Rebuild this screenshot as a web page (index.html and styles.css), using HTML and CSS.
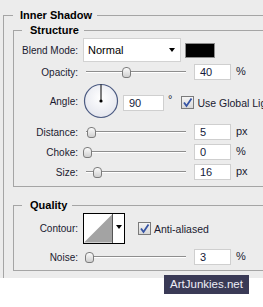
FILE: index.html
```html
<!DOCTYPE html>
<html lang="en">
<head>
    <meta charset="UTF-8">
    <meta name="viewport" content="width=device-width, initial-scale=1.0">
    <title>Inner Shadow</title>
    <link rel="stylesheet" href="styles.css">
</head>
<body>
<div class="panel">
    <fieldset class="group outer">
        <legend>Inner Shadow</legend>

        <fieldset class="group inner structure">
            <legend>Structure</legend>

            <div class="row blend-row">
                <label class="lbl">Blend Mode:</label>
                <div class="select"><span>Normal</span><span class="arrow"></span></div>
                <div class="swatch"></div>
            </div>

            <div class="row slider-row">
                <label class="lbl">Opacity:</label>
                <div class="slider"><div class="track"></div><div class="thumb" style="left:39px"></div></div>
                <div class="num">40</div>
                <span class="unit">%</span>
            </div>

            <div class="row angle-row">
                <label class="lbl">Angle:</label>
                <svg class="dial" width="36" height="36" viewBox="0 0 36 36">
                    <defs>
                        <radialGradient id="dialFill" cx="50%" cy="40%" r="60%">
                            <stop offset="0" stop-color="#ffffff"/>
                            <stop offset="1" stop-color="#e4e6ee"/>
                        </radialGradient>
                    </defs>
                    <circle cx="18" cy="18" r="16.5" fill="url(#dialFill)" stroke="#4c5b82" stroke-width="1.2"/>
                    <line x1="18" y1="18" x2="18" y2="1.5" stroke="#000" stroke-width="1"/>
                    <circle cx="18" cy="18" r="1.6" fill="#000"/>
                </svg>
                <div class="num wide">90</div>
                <span class="deg">°</span>
                <span class="check">
                    <svg width="13" height="13" viewBox="0 0 13 13">
                        <path d="M3 6.5 L5.5 10 L10.5 2.5" fill="none" stroke="#3654a4" stroke-width="1.8"/>
                    </svg>
                </span>
                <span class="check-text">Use Global Light</span>
            </div>

            <div class="row slider-row first-gap">
                <label class="lbl">Distance:</label>
                <div class="slider"><div class="track"></div><div class="thumb" style="left:4px"></div></div>
                <div class="num">5</div>
                <span class="unit">px</span>
            </div>

            <div class="row slider-row">
                <label class="lbl">Choke:</label>
                <div class="slider"><div class="track"></div><div class="thumb" style="left:0px"></div></div>
                <div class="num">0</div>
                <span class="unit">%</span>
            </div>

            <div class="row slider-row">
                <label class="lbl">Size:</label>
                <div class="slider"><div class="track"></div><div class="thumb" style="left:10px"></div></div>
                <div class="num">16</div>
                <span class="unit">px</span>
            </div>
        </fieldset>

        <fieldset class="group inner quality">
            <legend>Quality</legend>

            <div class="row contour-row">
                <label class="lbl">Contour:</label>
                <div class="contour">
                    <svg class="curve" width="29" height="29" viewBox="0 0 29 29">
                        <rect width="29" height="29" fill="#fff"/>
                        <polygon points="0,29 29,0 29,29" fill="#a3a3a3"/>
                    </svg>
                    <span class="contour-drop"><span class="arrow"></span></span>
                </div>
                <span class="check aa">
                    <svg width="13" height="13" viewBox="0 0 13 13">
                        <path d="M3 6.5 L5.5 10 L10.5 2.5" fill="none" stroke="#3654a4" stroke-width="1.8"/>
                    </svg>
                </span>
                <span class="check-text">Anti-aliased</span>
            </div>

            <div class="row slider-row noise-row">
                <label class="lbl">Noise:</label>
                <div class="slider"><div class="track"></div><div class="thumb" style="left:2px"></div></div>
                <div class="num">3</div>
                <span class="unit">%</span>
            </div>
        </fieldset>
    </fieldset>
</div>

<div class="watermark">ArtJunkies.net</div>
</body>
</html>
```

FILE: styles.css
```css
* {
    box-sizing: border-box;
}

html, body {
    margin: 0;
}

body {
    width: 263px;
    height: 307px;
    overflow: hidden;
    position: relative;
    background-color: #ffffff;
    font-family: "Liberation Sans", Arial, sans-serif;
    font-size: 10px;
    color: #1a1a30;
}

.panel {
    height: 278px;
    padding: 8px 0 0 3px;
    overflow: hidden;
    background-color: #ececec;
}

.group {
    margin: 0;
    min-width: 0;
    border: 1px solid #a5a5a5;
}

.group legend {
    font-size: 11px;
    font-weight: bold;
    line-height: 15px;
    color: #000;
}

.outer {
    width: 300px;
    padding: 0 0 40px 9px;
}

.outer > legend {
    padding: 0 5px 0 7px;
}

.inner {
    padding: 0 0 4px 8px;
}

.inner > legend {
    padding: 0 5px 0 8px;
}

.quality {
    margin-top: 11px;
    padding-bottom: 3px;
}

.row {
    display: flex;
    align-items: center;
}

.lbl {
    flex: none;
    width: 56px;
    margin-right: 5px;
    text-align: right;
    white-space: nowrap;
}

/* blend mode */
.blend-row {
    height: 24px;
}

.select {
    display: flex;
    align-items: center;
    width: 98px;
    height: 24px;
    padding: 0 5px 0 4px;
    background-color: #fff;
    border: 1px solid #d2d2d2;
    font-size: 11px;
    color: #000;
}

.arrow {
    margin-left: auto;
    width: 0;
    height: 0;
    border-left: 3.5px solid transparent;
    border-right: 3.5px solid transparent;
    border-top: 4px solid #000;
}

.swatch {
    width: 30px;
    height: 15px;
    margin-left: 4px;
    background-color: #000;
    border: 1px solid #8c8c8c;
}

/* sliders */
.slider-row {
    height: 20px;
}

.first-gap {
    margin-top: 2px;
}

.slider {
    position: relative;
    flex: none;
    width: 111px;
    height: 20px;
}

.track {
    position: absolute;
    left: 3px;
    top: 9px;
    width: 100px;
    height: 2px;
    border-top: 1px solid #8e8e8e;
    border-bottom: 1px solid #fff;
}

.thumb {
    position: absolute;
    top: 5px;
    width: 9px;
    height: 11px;
    border: 1px solid #7c7c7c;
    border-radius: 4px 4px 3px 3px;
    background: linear-gradient(#fbfbfb, #cfcfcf);
}

.num {
    flex: none;
    width: 37px;
    height: 16px;
    padding-left: 5px;
    line-height: 14px;
    font-size: 11px;
    color: #141a3a;
    background-color: #fff;
    border: 1px solid #cfcfcf;
}

.num.wide {
    width: 41px;
}

.unit {
    align-self: flex-start;
    margin: 3px 0 0 5px;
    font-size: 11px;
}

/* angle */
.angle-row {
    height: 38px;
}

.dial {
    flex: none;
    margin-right: 4px;
}

.angle-row .num {
    margin-top: 3px;
}

.deg {
    align-self: flex-start;
    margin: 11px 0 0 4px;
    font-size: 11px;
}

.check {
    flex: none;
    display: flex;
    width: 13px;
    height: 13px;
    margin-left: 9px;
    border: 1px solid #7a7a7a;
    background: linear-gradient(#f4f4f4, #d8d8d8);
}

.check svg {
    margin: -1px;
}

.check-text {
    margin-left: 3px;
    font-size: 10.5px;
    white-space: nowrap;
}

.angle-row .check {
    margin-top: 3px;
}

.angle-row .check-text {
    margin-top: 3px;
}

/* contour */
.contour-row {
    height: 31px;
}

.contour {
    flex: none;
    display: flex;
    width: 42px;
    height: 31px;
    border: 1px solid #000;
    background-color: #fff;
}

.curve {
    display: block;
    border-right: 1px solid #555;
}

.contour-drop {
    display: flex;
    justify-content: center;
    flex: 1;
    padding-top: 11px;
}

.contour-drop .arrow {
    margin: 0;
}

.check.aa {
    margin-left: 13px;
}

.noise-row {
    margin-top: 3px;
}

.watermark {
    position: absolute;
    left: 164px;
    top: 275px;
    width: 85px;
    height: 19px;
    line-height: 19px;
    text-align: center;
    font-size: 11.5px;
    color: #eeeef6;
    background-color: #3a3a56;
}
```
